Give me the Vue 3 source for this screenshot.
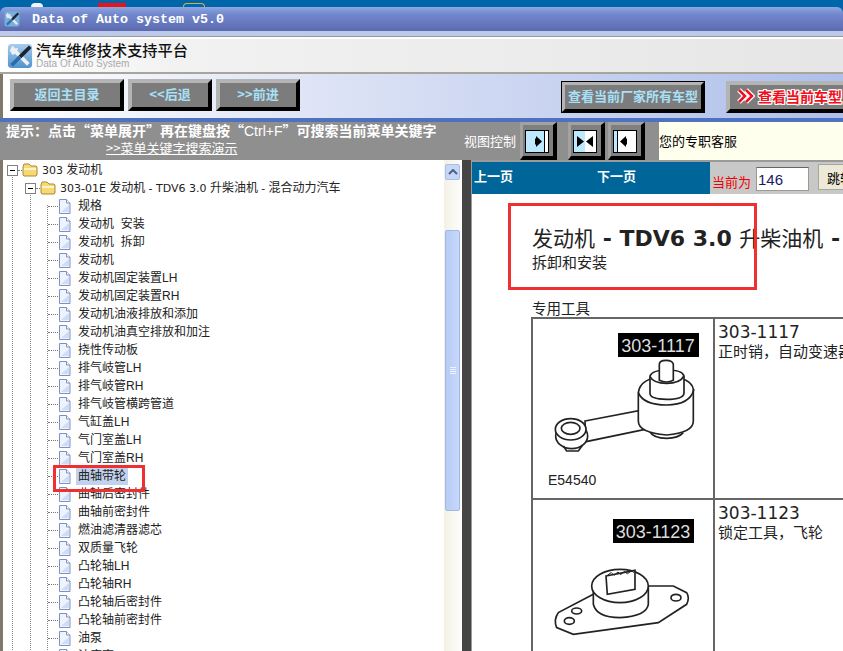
<script setup>
const items = [
  '规格', '发动机  安装', '发动机  拆卸', '发动机', '发动机固定装置LH', '发动机固定装置RH',
  '发动机油液排放和添加', '发动机油真空排放和加注', '挠性传动板', '排气岐管LH', '排气岐管RH',
  '排气岐管横跨管道', '气缸盖LH', '气门室盖LH', '气门室盖RH', '曲轴带轮', '曲轴后密封件',
  '曲轴前密封件', '燃油滤清器滤芯', '双质量飞轮', '凸轮轴LH', '凸轮轴RH', '凸轮轴后密封件',
  '凸轮轴前密封件', '油泵', '油底壳'
]
const selected = '曲轴带轮'
</script>

<template>
  <div class="app">
    <div class="desktop">
      <i class="bit bit-white"></i><i class="bit bit-red"></i><i class="bit bit-arc"></i>
    </div>

    <div class="titlebar">
      <svg class="logo small" viewBox="0 0 28 28">
        <rect x="1" y="1" width="26" height="26" rx="4" fill="#78aedc" />
        <path d="M8 8l15 15" stroke="#e4e8ee" stroke-width="4" />
        <path d="M3 8l3-5 3 3 3-1-2 6-4 2z" fill="#e4e8ee" />
        <path d="M25 4L14 15" stroke="#1c2430" stroke-width="4" />
        <path d="M14 15L5 24" stroke="#2f6fa8" stroke-width="4" />
      </svg>
      <span>Data of Auto system v5.0</span>
    </div>
    <div class="band"></div>

    <div class="brand">
      <svg class="logo" viewBox="0 0 28 28">
        <defs>
          <linearGradient id="sky" x1="0" y1="0" x2="0" y2="1">
            <stop offset="0" stop-color="#a8cdec" />
            <stop offset="1" stop-color="#4f93cc" />
          </linearGradient>
        </defs>
        <rect x="1" y="1" width="26" height="26" rx="4" fill="url(#sky)" />
        <path d="M8 8l15 15" stroke="#eef0f4" stroke-width="4" />
        <path d="M3 8l3-5 3 3 3-1-2 6-4 2z" fill="#eef0f4" />
        <path d="M25 4L14 15" stroke="#1c2430" stroke-width="4" />
        <path d="M14 15L5 24" stroke="#2a6ca8" stroke-width="4" />
      </svg>
      <div class="brand-text">
        <div class="brand-name">汽车维修技术支持平台</div>
        <div class="brand-sub">Data Of Auto System</div>
      </div>
    </div>

    <div class="toolbar">
      <button class="bevel b1">返回主目录</button>
      <button class="bevel b2">&lt;&lt;后退</button>
      <button class="bevel b2">&gt;&gt;前进</button>
      <button class="bevel b4">查看当前厂家所有车型</button>
      <button class="bevel b5">
        <svg class="chevrons" viewBox="0 0 18 16">
          <path d="M2 2l6 6-6 6M9 2l6 6-6 6" fill="none" stroke="#fff" stroke-width="5" />
          <path d="M2 2l6 6-6 6M9 2l6 6-6 6" fill="none" stroke="#f01020" stroke-width="2.500" />
        </svg>查看当前车型
      </button>
    </div>

    <div class="hintbar">
      <div class="hint">
        <div class="hint-text">提示：点击<span class="q">“</span>菜单展开<span class="q">”</span>再在键盘按<span class="q">“</span><span class="ctrl">Ctrl+F</span><span class="q">”</span>可搜索当前菜单关键字</div>
        <a class="hint-link">&gt;&gt;菜单关键字搜索演示</a>
      </div>
      <div class="view-label">视图控制</div>
      <div class="view-btn">
        <svg viewBox="0 0 24 23"><rect x=".5" y=".5" width="23" height="22" fill="#bde9ff" stroke="#000" /><rect x="20" y="1" width="3" height="21" fill="#fff" /><path d="M19.500 1v21" stroke="#000" /><path d="M11 6l0 2.500h-1v6h1v2.500l6-5.500z" fill="#000" /></svg>
      </div>
      <div class="view-btn gap">
        <svg viewBox="0 0 24 23"><rect x=".5" y=".5" width="23" height="22" fill="#fff" stroke="#000" /><rect x="1" y="1" width="11" height="21" fill="#bde9ff" /><path d="M4 6l7 5.500-7 5.500zM20 6l-7 5.500 7 5.500z" fill="#000" /></svg>
      </div>
      <div class="view-btn gap2">
        <svg viewBox="0 0 24 23"><rect x=".5" y=".5" width="23" height="22" fill="#fff" stroke="#000" /><rect x="1" y="1" width="3" height="21" fill="#bde9ff" /><path d="M4.500 1v21" stroke="#000" /><path d="M13 6l-6 5.500 6 5.500v-2.500h1v-6h-1z" fill="#000" /></svg>
      </div>
      <div class="service">您的专职客服</div>
    </div>

    <div class="main">
      <div class="tree-pane">
        <div class="tree">
          <div class="row lvl0">
            <span class="box"></span><span class="link"></span>
            <svg class="folder" viewBox="0 0 16 14"><path d="M1 4l1-3h5l2 2h5l1 1v8l-1 1H2l-1-1z" fill="#f8d870" stroke="#a88a38" /><path d="M2 6h12" stroke="#fff6cc" stroke-width="2" /></svg>
            <span class="label"><span class="lat">303</span> 发动机</span>
          </div>
          <div class="row lvl1">
            <span class="box"></span><span class="link"></span>
            <svg class="folder" viewBox="0 0 16 14"><path d="M1 4l1-3h5l2 2h5l1 1v8l-1 1H2l-1-1z" fill="#f8d870" stroke="#a88a38" /><path d="M2 6h12" stroke="#fff6cc" stroke-width="2" /></svg>
            <span class="label"><span class="lat">303-01E</span> 发动机  <span class="lat">- TDV6 3.0</span> 升柴油机  <span class="lat">-</span> 混合动力汽车</span>
          </div>
          <div v-for="item in items" :key="item" class="row leaf">
            <span class="dash"></span>
            <svg class="file" viewBox="0 0 13 15"><path d="M1.500 .5h7l3.500 3.500v10.500h-10.500z" fill="#eef3fc" stroke="#7d8fc4" /><path d="M8.500 .5v3.500h3.500" fill="#fff" stroke="#7d8fc4" /><path d="M3 13h8V6z" fill="#cfdcf5" /></svg>
            <span class="label" :class="{ sel: item === selected }">{{ item }}</span>
          </div>
        </div>
        <div class="scrollbar">
          <div class="sb-up"><svg viewBox="0 0 10 6"><path d="M1 5l4-4 4 4" fill="none" stroke="#4d6185" stroke-width="2" /></svg></div>
          <div class="sb-thumb"><i></i><i></i><i></i><i></i></div>
        </div>
      </div>
      <div class="splitter"></div>

      <div class="doc-pane">
        <div class="pager">
          <div class="pager-links"><span>上一页</span><span>下一页</span></div>
          <div class="jump">
            <span class="current">当前为</span>
            <input class="page-input" value="146" />
            <button class="jump-btn">跳转</button>
          </div>
        </div>
        <div class="doc">
          <h1>发动机<b> - TDV6 3.0 </b>升柴油机<b> - 混合动力汽车</b></h1>
          <div class="subtitle">拆卸和安装</div>
          <div class="tools-title">专用工具</div>
          <div class="tool-table">
            <div class="cell pic">
              <svg viewBox="0 0 178 178" width="178" height="178">
                <rect x="85" y="14" width="81" height="24" fill="#000" />
                <text x="125" y="33" class="tag" text-anchor="middle">303-1117</text>
                <g transform="translate(-3 -8) scale(.3333)" fill="#fff" stroke="#222" stroke-width="5">
                  <path d="M165 330l165-32 30 54-192 40z" />
                  <ellipse cx="125" cy="375" rx="48" ry="38" />
                  <ellipse cx="122" cy="355" rx="46" ry="32" />
                  <ellipse cx="122" cy="352" rx="28" ry="18" />
                  <path d="M100 405l10 15h35l13-18" fill="none" />
                  <path d="M358 360q12 22 52 22 35 0 50-17" />
                  <path d="M325 245v85q0 35 85 42 80-7 80-42v-95q-5-35-82-40-78 5-83 50z" />
                  <path d="M325 245q15 37 85 37t82-47" fill="none" />
                  <path d="M360 195v52q0 18 50 18t52-18v-52q-5-18-50-18t-52 18z" />
                  <path d="M360 197q10 20 50 20t52-22" fill="none" />
                  <path d="M388 208v-48q0-12 20-12t22 12v48q-20 10-42 0z" />
                </g>
                <text x="15" y="166" class="code">E54540</text>
              </svg>
            </div>
            <div class="cell desc">
              <div class="part">303-1117</div>
              <div class="part-name">正时销，自动变速器</div>
            </div>
            <div class="cell pic">
              <svg viewBox="0 0 178 178" width="178" height="178">
                <rect x="80" y="19" width="81" height="24" fill="#000" />
                <text x="120" y="38" class="tag" text-anchor="middle">303-1123</text>
                <g transform="translate(-3 -189) scale(.3333)" fill="#fff" stroke="#222" stroke-width="5">
                  <path d="M190 850L85 905q-15 20-5 45l50 20 255-35 85-55q10-20 0-35l-40-20h-80z" />
                  <path d="M190 830v50q10 40 80 40 80-5 85-40v-50z" />
                  <ellipse cx="270" cy="825" rx="85" ry="50" />
                  <path d="M228 795l87-17v57l-83 15z" />
                  <path d="M232 793l12-8 8 8 12-10 8 8 12-10 8 8 12-10 8 6" fill="none" stroke-width="3" />
                  <ellipse cx="118" cy="930" rx="15" ry="10" />
                  <ellipse cx="140" cy="900" rx="15" ry="9" />
                  <ellipse cx="438" cy="860" rx="15" ry="10" />
                </g>
              </svg>
            </div>
            <div class="cell desc">
              <div class="part">303-1123</div>
              <div class="part-name">锁定工具，飞轮</div>
            </div>
          </div>
        </div>
      </div>
    </div>

    <div class="mark mark-title"></div>
    <div class="mark mark-item"></div>
  </div>
</template>

<style>
html, body { margin: 0; overflow: hidden; }
</style>

<style scoped>
.app {
  position: relative;
  width: 843px;
  height: 651px;
  overflow: hidden;
  display: flex;
  flex-direction: column;
  background: #0066aa;
  font-family: "Liberation Sans", "Noto Sans CJK SC", sans-serif;
  font-size: 12px;
}

.desktop { position: relative; height: 7px; flex: none; }
.bit { position: absolute; bottom: 0; }
.bit-white { left: 31px; width: 12px; height: 4px; background: #f0f4f8; border-radius: 6px 6px 0 0; }
.bit-red { left: 98px; width: 28px; height: 4px; background: #e8141c; }
.bit-arc { left: 183px; width: 20px; height: 3px; border: 1px solid #d8b040; border-bottom: 0; border-radius: 10px 10px 0 0; }

.titlebar {
  flex: none;
  height: 24px;
  display: flex;
  align-items: center;
  padding-left: 4px;
  background: linear-gradient(#8ea7e2, #7288cc 30%, #5c6ab0);
  border-radius: 6px 6px 0 0;
  color: #fff;
  font: bold 13.330px "Liberation Mono", monospace;
}
.logo.small { width: 16px; height: 16px; margin-right: 12px; }
.band { flex: none; height: 6px; box-sizing: border-box; background: #bcc9e8; border-bottom: 1px solid #9a9a90; }

.brand {
  flex: none;
  height: 37px;
  box-sizing: border-box;
  display: flex;
  align-items: center;
  padding-left: 7px;
  gap: 3px;
  border-top: 2px solid #fff;
  background: linear-gradient(90deg, #fff, #f2f2f2 170px, #e6e6e6);
  border-bottom: 2px solid #a8a69c;
}
.logo { width: 26px; height: 26px; flex: none; }
.brand-text { padding-bottom: 1px; }
.brand-name { font-family: "Noto Sans CJK SC", sans-serif; font-size: 15.200px; line-height: 16px; font-weight: 500; color: #111; }
.brand-sub { font: 10px/11px "Liberation Sans", sans-serif; color: #aaa; margin-top: 1px; }

.toolbar {
  flex: none;
  height: 44px;
  display: flex;
  align-items: flex-start;
  padding: 5px 0 0 10px;
  box-sizing: border-box;
  border-left: 3px solid #7d7a6c;
  background: linear-gradient(90deg, #fff, #dfe5f6 300px, #afbfea);
}
.bevel {
  height: 32px;
  padding: 0 0 3px;
  box-sizing: border-box;
  background: #7c7c7c;
  border-style: solid;
  border-width: 4px;
  border-color: #b4b4b4 #000 #000 #b4b4b4;
  color: #a8e0f8;
  font: bold 13px "Noto Sans CJK SC", sans-serif;
  white-space: nowrap;
  flex: none;
}
.b1 { width: 114px; margin-left: -3px; }
.b2 { width: 84px; margin-left: 4px; }
.b4 { width: 144px; margin: 2px 0 0 261px; outline: 1px solid #000; outline-offset: -1px; }
.b5 {
  width: 140px;
  margin: 2px 0 0 21px;
  padding-left: 7px;
  display: flex;
  align-items: center;
  color: #f01020;
  font-size: 14px;
  border-right-width: 0;
  text-shadow: 1px 0 #fff, -1px 0 #fff, 0 1px #fff, 0 -1px #fff, 1px 1px #fff, -1px -1px #fff, 1px -1px #fff, -1px 1px #fff;
}
.chevrons { width: 18px; height: 16px; margin-right: 3px; flex: none; }

.hintbar {
  flex: none;
  height: 42px;
  box-sizing: border-box;
  border-top: 4px solid #4f72c0;
  background: #8f8f8f;
  display: flex;
  align-items: stretch;
  color: #fff;
}
.hint { width: 462px; flex: none; padding-left: 6px; box-sizing: border-box; font-family: "Noto Sans CJK SC", sans-serif; }
.hint-text { font-size: 14px; line-height: 17px; font-weight: 700; white-space: pre; }
.q { display: inline-block; width: 14px; text-align: center; }
.ctrl { font: 14px "Liberation Sans", sans-serif; }
.hint-link { display: block; margin: 0 0 0 100px; font-size: 13px; line-height: 18px; text-decoration: underline; }
.view-label { width: 58px; flex: none; padding-left: 2px; box-sizing: border-box; font: 13px/37px "Noto Sans CJK SC", sans-serif; }
.view-btn {
  width: 37px;
  height: 38px;
  flex: none;
  box-sizing: border-box;
  padding: 5px 0 0 2px;
  background: #808080;
  border-style: solid;
  border-width: 3px 4px 4px 3px;
  border-color: #a2a2a2 #000 #000 #a2a2a2;
}
.view-btn svg { display: block; width: 24px; height: 23px; }
.gap { margin-left: 11px; }
.gap2 { margin-left: 3px; }
.service {
  flex: 1;
  margin-left: 14px;
  background: #ffffee;
  color: #000;
  font: 13px/37px "Noto Sans CJK SC", sans-serif;
  white-space: nowrap;
}

.main { flex: 1; min-height: 0; display: flex; border-left: 3px solid #7d7a6c; background: #fff; }

.tree-pane { width: 458px; flex: none; display: flex; overflow: hidden; }
.tree {
  flex: 1;
  padding-top: 1px;
  background-image:
    repeating-linear-gradient(#888 0 1px, transparent 1px 2px),
    repeating-linear-gradient(#888 0 1px, transparent 1px 2px),
    repeating-linear-gradient(#888 0 1px, transparent 1px 2px);
  background-size: 1px 100%;
  background-position: 9px 15px, 27px 33px, 44px 45px;
  background-repeat: no-repeat;
}
.row { height: 18px; display: flex; align-items: center; white-space: pre; color: #222; position: relative; }
.lvl0 { padding-left: 4px; }
.lvl1 { padding-left: 22px; }
.box {
  width: 9px; height: 9px; flex: none;
  border: 1px solid #808080;
  background: linear-gradient(#000, #000) center / 5px 1px no-repeat, #fff;
}
.link { width: 4px; border-top: 1px dotted #777; flex: none; }
.folder { width: 16px; height: 14px; margin-right: 2px; flex: none; }
.leaf { padding-left: 45px; }
.dash { width: 10px; border-top: 1px dotted #777; flex: none; }
.file { width: 13px; height: 15px; margin-right: 5px; flex: none; }
.label { line-height: 18px; padding: 0 2px; }
.lat { font: 11px "DejaVu Sans", sans-serif; }
.sel { background: #c1d2ee; }

.scrollbar {
  width: 17px;
  flex: none;
  position: relative;
  background: linear-gradient(90deg, #f3f1e6, #fdfdfa);
}
.sb-up {
  height: 14px;
  margin: 4px 1px 0;
  border: 1px solid #a9bfe6;
  border-radius: 2px;
  background: #c6d6f6;
  display: flex; align-items: center; justify-content: center;
}
.sb-up svg { width: 10px; height: 6px; }
.sb-thumb {
  position: absolute;
  left: 1px; right: 1px; top: 70px; height: 281px;
  box-sizing: border-box;
  border: 1px solid #a0b8e4;
  border-radius: 2px;
  background: linear-gradient(90deg, #b6cbf7, #c8d8fa);
  display: flex; flex-direction: column; justify-content: center; gap: 1px; align-items: center;
}
.sb-thumb i { width: 6px; height: 1px; background: #eef3fe; }

.splitter { width: 10px; flex: none; margin-left: 1px; background: #454545; border-right: 1px solid #9a9a9a; box-sizing: border-box; }

.doc-pane { flex: 1; min-width: 0; display: flex; flex-direction: column; border-top: 2px solid #9a9a9a; font-family: "Noto Sans CJK SC", sans-serif; }
.pager { flex: none; height: 32px; display: flex; }
.pager-links { width: 238px; flex: none; background: #006699; color: #fff; font-size: 13px; font-weight: 700; line-height: 27px; padding-left: 2px; box-sizing: border-box; display: flex; gap: 84px; }
.jump { flex: 1; position: relative; background: #c8c8c8; white-space: nowrap; overflow: hidden; }
.current { position: absolute; left: 2px; top: 11px; color: #f00000; font-size: 13px; line-height: 18px; }
.page-input { position: absolute; left: 46px; top: 5px; width: 53px; height: 24px; box-sizing: border-box; border: 1px solid #9a9a90; border-top-color: #666; padding: 0 1px; background: #fff; color: #1a1a60; font: 15px "Liberation Sans", sans-serif; }
.jump-btn { position: absolute; left: 108px; top: 2px; width: 44px; height: 26px; padding: 0; border: 1px solid #a8a698; background: #ece9d8; font: 13px "Noto Sans CJK SC", sans-serif; color: #000; }

.doc { flex: 1; min-height: 0; padding: 32px 0 0 60px; white-space: nowrap; overflow: hidden; color: #222; }
h1 { margin: 0; font-size: 21px; line-height: 25px; font-weight: 400; font-family: "DejaVu Sans", "Noto Sans CJK SC", sans-serif; }
h1 b { font-weight: 700; font-size: 22px; }
.subtitle { font-size: 15px; line-height: 19px; }
.tools-title { font-size: 14.500px; line-height: 19px; margin-top: 27px; }
.tool-table {
  display: grid;
  grid-template-columns: 182px 200px;
  grid-template-rows: 181px 181px;
  border-top: 2px solid #666;
  border-left: 2px solid #666;
  width: 382px;
  margin-left: -1px;
}
.cell { border-right: 2px solid #666; border-bottom: 2px solid #666; box-sizing: border-box; overflow: hidden; }
.pic svg { display: block; }
.desc { padding: 4px 0 0 3px; }
.part { font: 17px/18px "DejaVu Sans", sans-serif; color: #222; }
.part-name { font-size: 15px; line-height: 19px; }
.tag { fill: #ddd; font: 18px "Liberation Sans", sans-serif; }
.code { fill: #222; font: 14px "Liberation Sans", sans-serif; }

.mark { position: absolute; border: 3px solid #f03030; box-sizing: border-box; pointer-events: none; }
.mark-title { left: 508px; top: 203px; width: 249px; height: 87px; }
.mark-item { left: 53px; top: 465px; width: 92px; height: 27px; }
</style>
